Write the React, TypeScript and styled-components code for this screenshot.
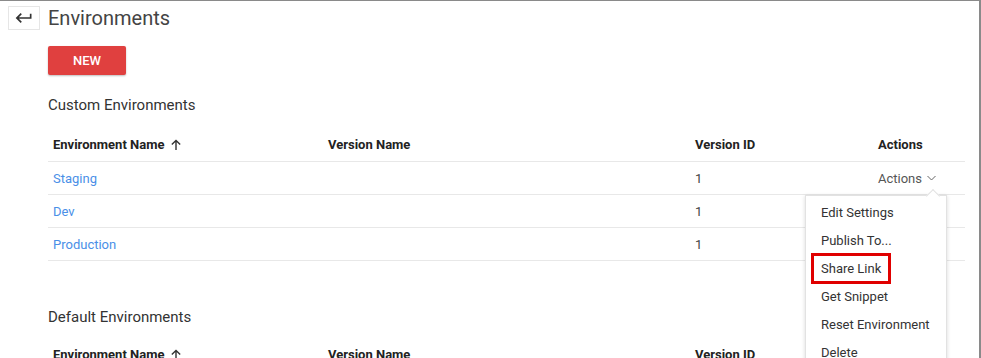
import styled, { createGlobalStyle } from "styled-components";

const GlobalStyle = createGlobalStyle`
    body {
        margin: 0;
        font-family: Roboto, "Liberation Sans", sans-serif;
        background: white;
    }
`;

const Frame = styled.div`
    width: 979px;
    height: 357px;
    border-top: 1px solid #8a8a8a;
    border-right: 2px solid #8a8a8a;
    overflow: hidden;
    position: relative;
`;

const Header = styled.div`
    display: flex;
    align-items: center;
    padding: 5px 0 0 8px;
`;

const BackButton = styled.button`
    width: 32px;
    height: 24px;
    border: 1px solid #e6e6e6;
    background: white;
    display: flex;
    align-items: center;
    justify-content: center;
    padding: 0;
    color: #333;
`;

const Title = styled.h1`
    margin: 0 0 0 8px;
    font-size: 20px;
    font-weight: 400;
    color: #444;
    line-height: 24px;
`;

const Content = styled.div`
    padding-left: 48px;
    width: 917px;
`;

const NewButton = styled.button`
    margin-top: 16px;
    width: 78px;
    height: 29px;
    border: none;
    border-radius: 2px;
    background: #e0403f;
    color: white;
    font-family: Roboto, "Liberation Sans", sans-serif;
    font-size: 13px;
    font-weight: 500;
    box-shadow: 0 1px 2px rgba(0, 0, 0, 0.25);
`;

const SectionTitle = styled.h2<{ $top: number }>`
    margin: ${(p) => p.$top}px 0 0;
    font-size: 15px;
    font-weight: 400;
    line-height: 20px;
    color: #333;
`;

const Table = styled.div<{ $top: number }>`
    margin-top: ${(p) => p.$top}px;
    position: relative;
`;

const Row = styled.div<{ $head?: boolean }>`
    display: grid;
    grid-template-columns: 275px 367px 183px 1fr;
    height: ${(p) => (p.$head ? 33 : 32)}px;
    align-items: center;
    border-bottom: 1px solid #e8e8e8;
    font-size: 13px;
`;

const HeadCell = styled.div`
    padding-left: 5px;
    font-weight: 700;
    color: #222;
    display: flex;
    align-items: center;
    gap: 6px;
`;

const Cell = styled.div`
    padding-left: 5px;
    color: #444;
    position: relative;
`;

const NameLink = styled.a`
    color: #4a8fe7;
    text-decoration: none;
`;

const ActionsToggle = styled.span`
    display: inline-flex;
    align-items: center;
    gap: 5px;
    color: #555;
`;

const Menu = styled.div`
    position: absolute;
    left: -68px;
    top: 24px;
    width: 140px;
    background: white;
    border: 1px solid #e2e2e2;
    box-shadow: 0 1px 4px rgba(0, 0, 0, 0.15);
    padding-top: 3px;
    z-index: 10;

    &::before {
        content: "";
        position: absolute;
        top: -5px;
        left: 122px;
        width: 9px;
        height: 9px;
        background: white;
        border-left: 1px solid #e2e2e2;
        border-top: 1px solid #e2e2e2;
        transform: rotate(45deg);
    }
`;

const MenuItem = styled.div`
    position: relative;
    height: 28px;
    line-height: 28px;
    padding-left: 15px;
    font-size: 13px;
    color: #333;
    white-space: nowrap;
`;

const Highlight = styled.span`
    position: absolute;
    left: 5px;
    top: -2px;
    width: 74px;
    height: 25px;
    border: 3px solid #e00000;
`;

const ReturnIcon = () => (
    <svg width="20" height="20" viewBox="0 0 24 24" fill="currentColor">
        <path d="M19 7v4H5.83l3.58-3.59L8 6l-6 6 6 6 1.41-1.41L5.83 13H21V7z" />
    </svg>
);

const SortIcon = () => (
    <svg width="12" height="12" viewBox="0 0 12 12" fill="none" stroke="#333" strokeWidth="1.4">
        <path d="M6 11V1.5M1.8 5.5L6 1.5l4.2 4" />
    </svg>
);

const Chevron = () => (
    <svg width="9" height="6" viewBox="0 0 9 6" fill="none" stroke="#666" strokeWidth="1">
        <path d="M0.5 1l4 4 4-4" />
    </svg>
);

const environments = ["Staging", "Dev", "Production"];
const menuItems = ["Edit Settings", "Publish To...", "Share Link", "Get Snippet", "Reset Environment", "Delete"];

const TableHead = () => (
    <Row $head>
        <HeadCell>Environment Name <SortIcon /></HeadCell>
        <HeadCell>Version Name</HeadCell>
        <HeadCell>Version ID</HeadCell>
        <HeadCell>Actions</HeadCell>
    </Row>
);

const App = () => {
    return (
        <Frame>
            <GlobalStyle />
            <Header>
                <BackButton><ReturnIcon /></BackButton>
                <Title>Environments</Title>
            </Header>
            <Content>
                <NewButton>NEW</NewButton>
                <SectionTitle $top={20}>Custom Environments</SectionTitle>
                <Table $top={13}>
                    <TableHead />
                    {environments.map((name, i) => (
                        <Row key={name}>
                            <Cell><NameLink href="#">{name}</NameLink></Cell>
                            <Cell></Cell>
                            <Cell>1</Cell>
                            <Cell>
                                {i === 0 && (
                                    <>
                                        <ActionsToggle>Actions <Chevron /></ActionsToggle>
                                        <Menu>
                                            {menuItems.map((item) => (
                                                <MenuItem key={item}>
                                                    {item}
                                                    {item === "Share Link" && <Highlight />}
                                                </MenuItem>
                                            ))}
                                        </Menu>
                                    </>
                                )}
                            </Cell>
                        </Row>
                    ))}
                </Table>
                <SectionTitle $top={46}>Default Environments</SectionTitle>
                <Table $top={11}>
                    <TableHead />
                </Table>
            </Content>
        </Frame>
    );
};

export default App;
